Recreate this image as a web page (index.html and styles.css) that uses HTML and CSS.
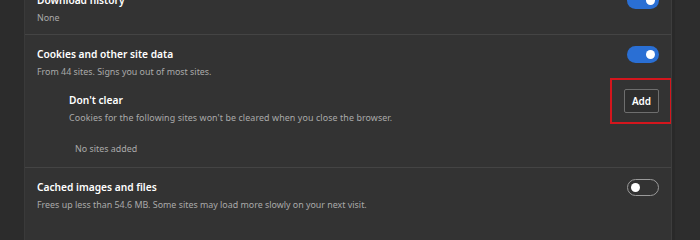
FILE: index.html
```html
<!DOCTYPE html>
<html lang="en">
<head>
<meta charset="utf-8">
<title>Clear browsing data</title>
<link rel="stylesheet" href="styles.css">
</head>
<body>
<div class="page">
  <div class="gutter"></div>
  <div class="card">
    <div class="row">
      <div class="row-head">
        <div class="text">
          <div class="title">Download history</div>
          <div class="sub">None</div>
        </div>
        <div class="toggle-slot"><span class="toggle on"><span class="knob"></span></span></div>
      </div>
    </div>
    <div class="row">
      <div class="row-head">
        <div class="text">
          <div class="title">Cookies and other site data</div>
          <div class="sub">From 44 sites. Signs you out of most sites.</div>
        </div>
        <div class="toggle-slot"><span class="toggle on"><span class="knob"></span></span></div>
      </div>
      <div class="nested">
        <div class="nested-head">
          <div class="text">
            <div class="title">Don't clear</div>
            <div class="sub">Cookies for the following sites won't be cleared when you close the browser.</div>
          </div>
          <div class="add-wrap">
            <button class="add-btn">Add</button>
            <span class="highlight"></span>
          </div>
        </div>
        <div class="empty">No sites added</div>
      </div>
    </div>
    <div class="row">
      <div class="row-head">
        <div class="text">
          <div class="title">Cached images and files</div>
          <div class="sub">Frees up less than 54.6 MB. Some sites may load more slowly on your next visit.</div>
        </div>
        <div class="toggle-slot"><span class="toggle off"><span class="knob"></span></span></div>
      </div>
    </div>
  </div>
  <div class="rail"></div>
</div>
</body>
</html>
```
FILE: styles.css
```css
html, body {
  margin: 0;
  padding: 0;
  height: 100%;
  background: #2b2b2b;
  overflow: hidden;
}
body {
  width: 700px;
  font-family: "Noto Sans", "Open Sans", "Liberation Sans", sans-serif;
  color: #ffffff;
}
.page {
  display: flex;
  height: 100vh;
  min-height: 215px;
  overflow: hidden;
}
.gutter {
  width: 24px;
  flex: none;
  background: #2c2c2c;
}
.card {
  width: 646px;
  flex: none;
  background: #333333;
  border-left: 1px solid #3a3a3a;
  border-right: 1px solid #3d3d3d;
  margin-top: -19px;
  height: calc(100% + 19px);
  overflow: hidden;
}
.rail {
  flex: 1;
  background: #2d2d2d;
  border-left: 3px solid #292929;
}
.row {
  padding: 10px 12px 7px 12px;
  border-bottom: 1px solid #444444;
}
.row:last-child {
  border-bottom: none;
}
.row-head, .nested-head {
  display: flex;
  justify-content: space-between;
  align-items: flex-start;
}
.title {
  font-size: 10.2px;
  font-weight: 600;
  line-height: 18px;
  color: #ffffff;
}
.sub {
  font-size: 8.9px;
  line-height: 18px;
  color: #aaaaaa;
}
.nested .sub {
  letter-spacing: 0.1px;
}
.toggle-slot {
  height: 18px;
  display: flex;
  align-items: center;
}
.toggle {
  width: 32px;
  height: 17px;
  border-radius: 9px;
  box-sizing: border-box;
  display: flex;
  align-items: center;
  padding: 0 4px;
}
.toggle.on {
  background: #2a6fd4;
  justify-content: flex-end;
}
.toggle.off {
  border: 1px solid #9a9a9a;
  background: transparent;
  justify-content: flex-start;
  padding: 0 3px;
}
.knob {
  width: 9px;
  height: 9px;
  border-radius: 50%;
  background: #ffffff;
}
.row:nth-child(2) {
  padding-bottom: 9px;
}
.nested {
  margin-top: 10px;
  padding-left: 32px;
}
.add-wrap {
  position: relative;
  margin-top: -2px;
}
.add-btn {
  display: block;
  width: 35px;
  height: 24px;
  padding: 0;
  background: #2e2e2e;
  border: 1px solid #6e6e6e;
  border-radius: 2px;
  color: #ffffff;
  font-family: "Noto Sans", "Open Sans", sans-serif;
  font-size: 10px;
  font-weight: 600;
}
.highlight {
  position: absolute;
  left: -14px;
  right: -13px;
  top: -11px;
  bottom: -11px;
  border: 2px solid #d4161d;
  pointer-events: none;
}
.empty {
  margin-top: 13px;
  padding-left: 6px;
  font-size: 8.9px;
  line-height: 18px;
  color: #aaaaaa;
}
```
